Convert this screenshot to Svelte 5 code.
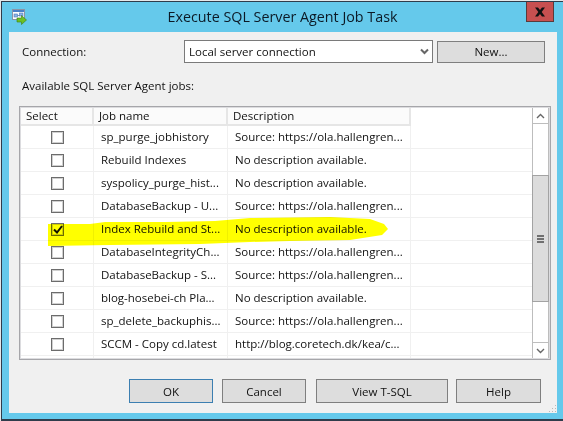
<script>
  const rows = [
    { name: 'sp_purge_jobhistory', desc: 'Source: https://ola.hallengren...' },
    { name: 'Rebuild Indexes', desc: 'No description available.' },
    { name: 'syspolicy_purge_hist...', desc: 'No description available.' },
    { name: 'DatabaseBackup - U...', desc: 'Source: https://ola.hallengren...' },
    { name: 'Index Rebuild and St...', desc: 'No description available.', checked: true },
    { name: 'DatabaseIntegrityCh...', desc: 'Source: https://ola.hallengren...' },
    { name: 'DatabaseBackup - S...', desc: 'Source: https://ola.hallengren...' },
    { name: 'blog-hosebei-ch Pla...', desc: 'No description available.' },
    { name: 'sp_delete_backuphis...', desc: 'Source: https://ola.hallengren...' },
    { name: 'SCCM - Copy cd.latest', desc: 'http://blog.coretech.dk/kea/c...' }
  ];
</script>

<div class="window">
  <div class="titlebar">
    <div class="title-left">
      <svg class="app-icon" width="15" height="16" viewBox="0 0 15 16">
        <rect x="0.5" y="0.5" width="12" height="10" fill="#fff" stroke="#8a94a6" />
        <rect x="1" y="1" width="11" height="2" fill="#4a80c8" />
        <rect x="2" y="5" width="3.5" height="3" fill="#8fb4e6" stroke="#4f78b8" stroke-width="0.6" />
        <rect x="7.5" y="4" width="3.5" height="3" fill="#8fb4e6" stroke="#4f78b8" stroke-width="0.6" />
        <path d="M5.5 6.5h2" stroke="#4f78b8" stroke-width="0.8" />
        <path d="M5 9h4.5V6.5l5 4.5-5 4.5V13H5z" fill="#6cc024" stroke="#3d7d12" stroke-width="0.6" />
      </svg>
    </div>
    <div class="title">Execute SQL Server Agent Job Task</div>
    <div class="title-right">
      <div class="close">
        <svg width="12" height="10" viewBox="0 0 12 10">
          <path d="M1 0.5h3l2 2.4 2-2.4h3L7.7 5 11 9.5H8L6 7 4 9.5H1L4.3 5z" fill="#111" />
        </svg>
      </div>
    </div>
  </div>

  <div class="client">
    <div class="connection">
      <span class="conn-label">Connection:</span>
      <div class="combo">
        <span>Local server connection</span>
        <svg width="9" height="7" viewBox="0 0 9 7"><path d="M1 1.5l3.5 3.5L8 1.5" fill="none" stroke="#666" stroke-width="2" /></svg>
      </div>
      <button class="btn new">New...</button>
    </div>

    <div class="avail">Available SQL Server Agent jobs:</div>

    <div class="table">
      <div class="list">
        <div class="head">
          <div class="hcell">Select</div>
          <div class="hcell">Job name</div>
          <div class="hcell">Description</div>
        </div>
        {#each rows as r}
          <div class="row">
            <div class="cell check-cell">
              <span class="box" class:on={r.checked}>
                {#if r.checked}
                  <svg width="10" height="9" viewBox="0 0 10 9"><path d="M1 4.5l3 3 5-6.5" fill="none" stroke="#111" stroke-width="2" /></svg>
                {/if}
              </span>
            </div>
            <div class="cell">{r.name}</div>
            <div class="cell">{r.desc}</div>
          </div>
        {/each}
        <div class="row partial">
          <div class="cell"></div>
          <div class="cell"></div>
          <div class="cell"></div>
        </div>
      </div>
      <div class="scrollbar">
        <div class="sb-btn">
          <svg width="9" height="6" viewBox="0 0 9 6"><path d="M1 5l3.5-3.5L8 5" fill="none" stroke="#666" stroke-width="1.4" /></svg>
        </div>
        <div class="sb-top"></div>
        <div class="thumb"><span></span><span></span><span></span></div>
        <div class="sb-bottom"></div>
        <div class="sb-btn">
          <svg width="9" height="6" viewBox="0 0 9 6"><path d="M1 1l3.5 3.5L8 1" fill="none" stroke="#666" stroke-width="1.4" /></svg>
        </div>
      </div>
    </div>

    <div class="buttons">
      <button class="btn ok">OK</button>
      <button class="btn cancel">Cancel</button>
      <button class="btn view">View T-SQL</button>
      <button class="btn help">Help</button>
    </div>

    <svg class="grip" width="9" height="9" viewBox="0 0 9 9">
      <g fill="#b8b8b8">
        <rect x="7" y="1" width="1" height="1" />
        <rect x="4" y="4" width="1" height="1" /><rect x="7" y="4" width="1" height="1" />
        <rect x="1" y="7" width="1" height="1" /><rect x="4" y="7" width="1" height="1" /><rect x="7" y="7" width="1" height="1" />
      </g>
    </svg>
  </div>

  <svg class="marker" width="563" height="421" viewBox="0 0 563 421">
    <path d="M48 224 L90 224 L105 222 L165 222 L215 221 L250 218 L330 217 L370 219 L384 224 L388 229 L382 235 L350 240 L290 241 L250 242 L200 244 L110 245 L48 246 Z" fill="#ffff00" />
  </svg>
</div>

<style>
  :global(body) {
    margin: 0;
    background: #e4e8ea;
  }
  .window {
    position: relative;
    width: 562px;
    height: 420px;
    margin: 1px 0 0 1px;
    box-sizing: border-box;
    overflow: hidden;
    background: #65c9eb;
    border-top: 1px solid #2f3c4b;
    border-left: 1px solid #2f3c4b;
    border-bottom: 2px solid #2f3c4b;
    font-family: "Open Sans", "Liberation Sans", sans-serif;
    font-size: 11.5px;
    color: #111;
  }
  .titlebar {
    height: 30px;
    display: grid;
    grid-template-columns: 1fr auto 1fr;
  }
  .title-left {
    padding: 7px 0 0 10px;
  }
  .app-icon {
    display: block;
  }
  .title {
    font-size: 14.3px;
    line-height: 30px;
    color: #0c1a26;
  }
  .title-right {
    display: flex;
    justify-content: flex-end;
    padding-right: 9px;
  }
  .close {
    width: 28px;
    height: 20px;
    box-sizing: border-box;
    background: #c75050;
    border: 1px solid #5a3a3a;
    border-top: none;
    display: flex;
    align-items: center;
    justify-content: center;
  }
  .client {
    position: relative;
    box-sizing: border-box;
    width: 548px;
    height: 381px;
    margin-left: 7px;
    background: #f0f0f0;
    padding-top: 8px;
  }
  .connection {
    display: flex;
    align-items: center;
    padding-left: 13px;
  }
  .conn-label {
    width: 162px;
  }
  .combo {
    box-sizing: border-box;
    width: 249px;
    height: 23px;
    background: #fff;
    border: 1px solid #7a7a7a;
    display: flex;
    align-items: center;
    justify-content: space-between;
    padding: 0 3px 0 4px;
  }
  .btn {
    box-sizing: border-box;
    height: 24px;
    background: #dddddd;
    border: 1px solid #7f7f7f;
    padding: 0;
    font: inherit;
    color: inherit;
  }
  .new {
    width: 108px;
    height: 22px;
    margin-left: 4px;
  }
  .avail {
    margin: 15px 0 0 13px;
    line-height: 16px;
  }
  .table {
    box-sizing: border-box;
    display: flex;
    width: 532px;
    height: 254px;
    margin: 12px 0 0 10px;
    padding: 1px;
    background: #dcdcdf;
    border: 1px solid #a6a6aa;
  }
  .list {
    flex: 1;
    overflow: hidden;
    background: #fff;
  }
  .head {
    display: grid;
    grid-template-columns: 73px 134px 183px;
    height: 18px;
  }
  .hcell {
    box-sizing: border-box;
    border-right: 2px solid #e6e6e6;
    border-bottom: 2px solid #e6e6e6;
    background: #fbfbfb;
    padding-left: 5px;
    line-height: 16px;
  }
  .row {
    display: grid;
    grid-template-columns: 73px 134px 183px;
    height: 23px;
    box-sizing: border-box;
    border-bottom: 1px solid #f0f0f0;
  }
  .row.partial {
    border-bottom: none;
  }
  .cell {
    box-sizing: border-box;
    border-right: 1px solid #f0f0f0;
    padding-left: 7px;
    line-height: 22px;
    white-space: nowrap;
    overflow: hidden;
  }
  .check-cell {
    padding-left: 30px;
    display: flex;
    align-items: center;
  }
  .box {
    box-sizing: border-box;
    width: 13px;
    height: 13px;
    border: 1px solid #6c6c6c;
    box-shadow: inset 0 0 0 1px #d0d0d0;
    background: #fff;
    display: flex;
    align-items: center;
    justify-content: center;
  }
  .scrollbar {
    width: 17px;
    display: flex;
    flex-direction: column;
    box-sizing: border-box;
    background: #fff;
    border-left: 1px solid #bdbdbd;
    border-right: 1px solid #bdbdbd;
  }
  .sb-btn {
    height: 16px;
    box-sizing: border-box;
    display: flex;
    align-items: center;
    justify-content: center;
  }
  .sb-btn:first-child {
    border-bottom: 1px solid #bdbdbd;
  }
  .sb-btn:last-child {
    border-top: 1px solid #bdbdbd;
  }
  .sb-top {
    height: 51px;
  }
  .thumb {
    height: 127px;
    box-sizing: border-box;
    background: #dcdcdc;
    border: 1px solid #a3a3a3;
    margin: 0 -1px;
    display: flex;
    flex-direction: column;
    align-items: center;
    justify-content: center;
    gap: 1px;
  }
  .thumb span {
    width: 7px;
    height: 2px;
    background: #707070;
  }
  .sb-bottom {
    height: 40px;
  }
  .buttons {
    display: flex;
    padding-left: 120px;
    margin-top: 19px;
  }
  .ok {
    width: 84px;
    border-color: #3c7fb1;
  }
  .cancel {
    width: 84px;
    margin-left: 9px;
  }
  .view {
    width: 132px;
    margin-left: 10px;
  }
  .help {
    width: 85px;
    margin-left: 8px;
  }
  .grip {
    position: absolute;
    right: 0;
    bottom: 0;
  }
  .marker {
    position: absolute;
    left: -2px;
    top: -2px;
    pointer-events: none;
    mix-blend-mode: multiply;
  }
</style>
